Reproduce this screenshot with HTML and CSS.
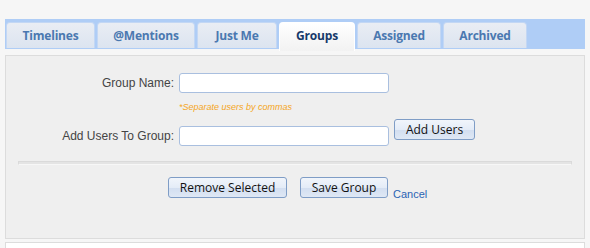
FILE: index.html
```html
<!DOCTYPE html>
<html lang="en">
<head>
    <meta charset="UTF-8">
    <title>Groups</title>
    <link rel="stylesheet" href="styles.css">
</head>
<body>
    <ul class="tabs">
        <li class="tab">Timelines</li>
        <li class="tab">@Mentions</li>
        <li class="tab">Just Me</li>
        <li class="tab tab-active">Groups</li>
        <li class="tab">Assigned</li>
        <li class="tab">Archived</li>
    </ul>

    <div class="panel">
        <div class="form-row">
            <label class="form-label">Group Name:</label>
            <input class="form-input" type="text">
        </div>
        <div class="form-hint">*Separate users by commas</div>
        <div class="form-row form-row-users">
            <label class="form-label">Add Users To Group:</label>
            <input class="form-input" type="text">
            <button class="btn btn-add">Add Users</button>
        </div>

        <hr class="divider">

        <div class="actions">
            <button class="btn btn-remove">Remove Selected</button>
            <button class="btn btn-save">Save Group</button>
            <a class="cancel" href="#">Cancel</a>
        </div>
    </div>

    <div class="panel-next"></div>
</body>
</html>
```

FILE: styles.css
```css
body {
    margin: 0;
    padding: 19px 5px 0 5px;
    background: #f6f6f6;
    font-family: "Liberation Sans", Arial, sans-serif;
    overflow: hidden;
}

.tabs {
    display: flex;
    gap: 2px;
    list-style: none;
    margin: 0;
    padding: 3px 0 0 1px;
    height: 27px;
    background: #afcdf6;
}

.tab {
    height: 25px;
    line-height: 25px;
    text-align: center;
    font-family: "Open Sans", sans-serif;
    font-weight: bold;
    font-size: 12px;
    letter-spacing: -0.2px;
    color: #4a78b0;
    background: linear-gradient(#e9edf4, #dce4f0);
    border: 1px solid #c3d7f4;
    border-bottom: none;
    border-radius: 4px 4px 0 0;
}

.tab:nth-child(1) { width: 87px; }
.tab:nth-child(2) { width: 96px; }
.tab:nth-child(3) { width: 78px; }
.tab:nth-child(4) { width: 74px; }
.tab:nth-child(5) { width: 82px; }
.tab:nth-child(6) { width: 82px; }

.tab-active {
    height: 28px;
    color: #173a6a;
    background: linear-gradient(#ffffff, #f2f2f2);
    border-color: #ffffff;
}

.panel {
    margin-top: 6px;
    height: 165px;
    background: #efefef;
    border: 1px solid #dcdcdc;
    padding-top: 17px;
}

.form-row {
    display: flex;
    align-items: flex-start;
    gap: 5px;
}

.form-label {
    width: 168px;
    text-align: right;
    font-size: 12px;
    color: #444;
    line-height: 20px;
}

.form-input {
    width: 210px;
    height: 20px;
    box-sizing: border-box;
    margin: 0;
    border: 1px solid #a9bfdf;
    border-radius: 3px;
    background: #fff;
}

.form-hint {
    margin: 9px 0 0 173px;
    font-size: 9px;
    font-style: italic;
    color: #f5a623;
    height: 14px;
}

.form-row-users {
    margin-top: 3px;
}

.form-row-users .form-label,
.form-row-users .form-input {
    margin-top: 7px;
}

.btn {
    height: 21px;
    padding: 0;
    font-family: "Open Sans", sans-serif;
    font-size: 12px;
    color: #111;
    background: linear-gradient(#f1f5fb 0%, #e4ecf7 50%, #d2def0 51%, #dfe8f5 100%);
    border: 1px solid #7f9dc6;
    border-radius: 3px;
}

.btn-add {
    width: 81px;
}

.divider {
    margin: 15px 12px 0 12px;
    height: 2px;
    border: 1px solid #dadada;
    border-bottom-color: #f7f7f7;
    background: #e4e4e4;
}

.actions {
    display: flex;
    align-items: flex-start;
    margin: 12px 0 0 162px;
}

.btn-remove {
    width: 119px;
}

.btn-save {
    width: 88px;
    margin-left: 13px;
}

.cancel {
    margin: 11px 0 0 5px;
    font-size: 11px;
    color: #2b64b4;
    text-decoration: none;
}

.panel-next {
    margin-top: 3px;
    height: 10px;
    background: #fff;
    border: 1px solid #dcdcdc;
}
```
